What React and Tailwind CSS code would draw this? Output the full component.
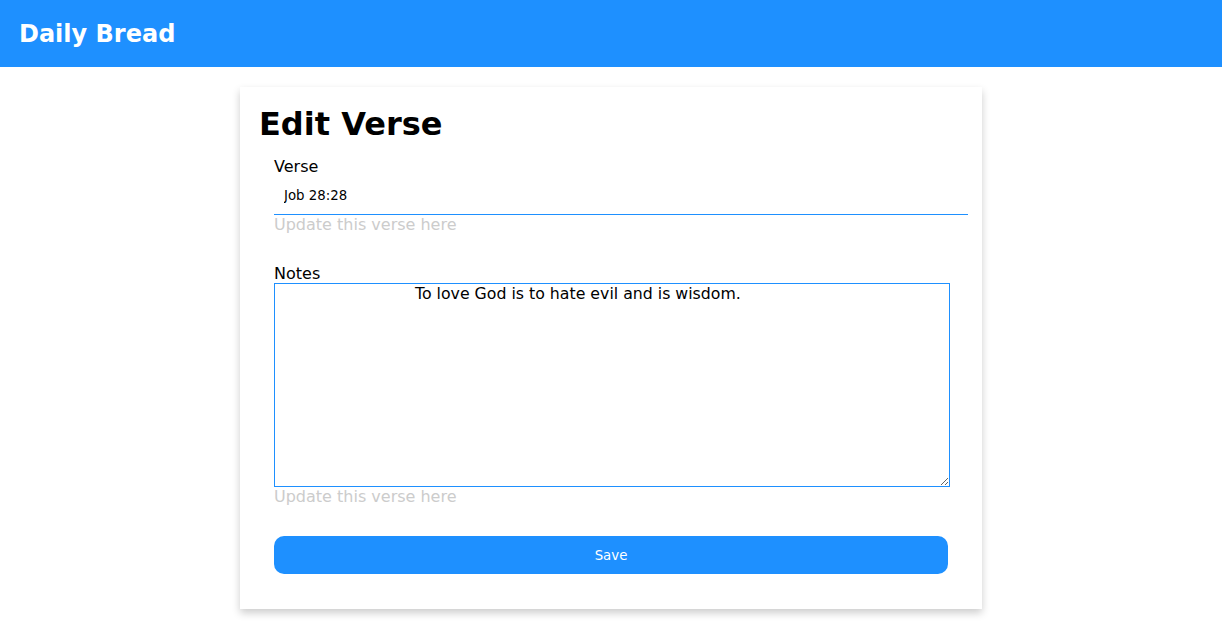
export default function App() {
  return (
    <div className="min-h-[640px] bg-white text-black" style={{ fontFamily: '"DejaVu Sans", sans-serif' }}>
      <header className="h-[67px] bg-[#1e90ff] flex items-center px-[19px]">
        <span className="text-white text-[24px] font-bold leading-[28px]">Daily Bread</span>
      </header>
      <div className="w-[742px] mx-auto mt-5 bg-white pt-[19px] pl-[19px] pr-[14px] pb-[35px] shadow-[0_4px_8px_0_rgba(0,0,0,0.2)]">
        <h1 className="text-[32px] font-bold leading-[37px]">Edit Verse</h1>
        <form className="ml-[15px] w-[694px] mt-[14px] flex flex-col" onSubmit={(e) => e.preventDefault()}>
          <label className="text-[16px] leading-[19px]">Verse</label>
          <input
            className="h-[39px] w-[694px] px-[10px] pt-[1px] text-[13.33px] border-b border-[#1e90ff] outline-none"
            defaultValue="Job 28:28"
          />
          <span className="text-[16px] leading-[19px] text-[#cccccc]">Update this verse here</span>
          <label className="text-[16px] leading-[19px] mt-[30px]">Notes</label>
          <textarea
            className="w-[676px] h-[204px] border border-[#1e90ff] p-0 pl-[140px] text-[15.75px] leading-[19px] outline-none"
            defaultValue="To love God is to hate evil and is wisdom."
          />
          <span className="text-[16px] leading-[19px] text-[#cccccc]">Update this verse here</span>
          <button
            type="submit"
            className="mt-[30px] w-[674px] h-[38px] pt-[1px] rounded-[10px] bg-[#1e90ff] text-white text-[13.33px]"
          >
            Save
          </button>
        </form>
      </div>
    </div>
  );
}
